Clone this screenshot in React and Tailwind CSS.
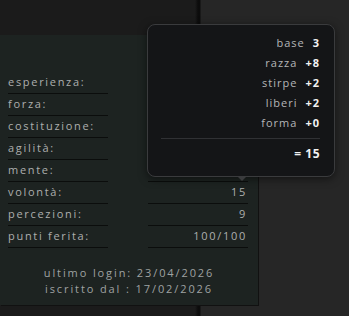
const STATS = [
  { label: 'esperienza:', value: '' },
  { label: 'forza:', value: '' },
  { label: 'costituzione:', value: '' },
  { label: 'agilità:', value: '' },
  { label: 'mente:', value: '' },
  { label: 'volontà:', value: '15' },
  { label: 'percezioni:', value: '9' },
  { label: 'punti ferita:', value: '100/100' },
]

const BREAKDOWN = [
  { label: 'base', value: '3' },
  { label: 'razza', value: '+8' },
  { label: 'stirpe', value: '+2' },
  { label: 'liberi', value: '+2' },
  { label: 'forma', value: '+0' },
]

export default function App() {
  return (
    <div className="relative w-[349px] h-[316px] overflow-hidden pt-[35px] font-['Open_Sans',sans-serif] bg-[linear-gradient(to_right,#1b1b1b_0px,#1b1b1b_195px,#0c0c0c_198px,#0c0c0c_200px,#262626_201px,#262626_100%)]">
      {/* Scheda */}
      <div className="w-[258px] h-[270px] bg-[#1d2321] pt-[37px] shadow-[1px_1px_0_#111]">
        <div className="flex flex-col">
          {STATS.map(({ label, value }) => (
            <div key={label} className="flex gap-[40px] px-[8px]">
              <div className="w-[100px] h-[22px] flex items-center border-b border-[#0b0d0c] text-[11px] tracking-[1.7px] text-[#adafae] whitespace-nowrap">
                {label}
              </div>
              <div className="w-[100px] h-[22px] flex items-center justify-end border-b border-[#0b0d0c] text-[11px] tracking-[1.7px] text-[#adafae] pr-[1px]">
                {value}
              </div>
            </div>
          ))}
        </div>

        <div className="mt-[17px] text-center text-[11px] leading-[16px] tracking-[1.9px] text-[#9fa2a1]">
          <div>ultimo login: 23/04/2026</div>
          <div>iscritto dal : 17/02/2026</div>
        </div>
      </div>

      {/* Tooltip */}
      <div className="absolute left-[147px] top-[24px] w-[188px] h-[153px] rounded-lg border border-[#3a3b3d] bg-[#141517] pt-[8px] pr-[14px] pl-[13px] shadow-[0_2px_8px_rgba(0,0,0,0.5)]">
        <div className="flex flex-col">
          {BREAKDOWN.map(({ label, value }) => (
            <div key={label} className="flex justify-end items-center gap-[8px] h-[20px] text-[11px] tracking-[1px]">
              <span className="text-[#b4b5b7]">{label}</span>
              <span className="font-bold text-[#f2f2f2]">{value}</span>
            </div>
          ))}
        </div>
        <div className="mt-[5px] border-t border-[#303134]" />
        <div className="mt-[5px] h-[20px] flex justify-end items-center text-[12px] tracking-[0.5px] font-bold text-[#f2f2f2]">
          = 15
        </div>
        <div className="absolute left-[89px] -bottom-[5px] w-0 h-0 border-x-[5px] border-x-transparent border-t-[5px] border-t-[#3a3b3d]" />
      </div>
    </div>
  )
}
